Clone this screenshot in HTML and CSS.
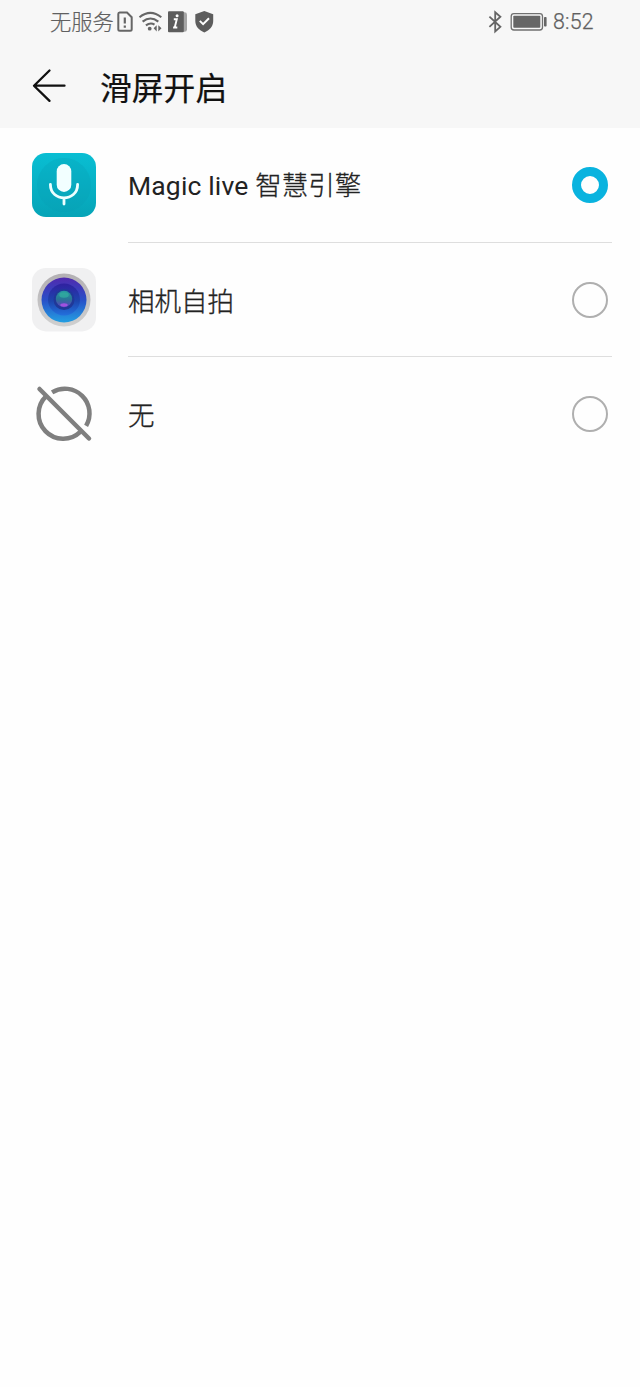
FILE: index.html
```html
<!DOCTYPE html>
<html lang="zh-CN">
<head>
<meta charset="utf-8">
<title>滑屏开启</title>
<link rel="stylesheet" href="styles.css">
</head>
<body>
<header class="top">
  <div class="status">
    <span class="carrier">无服务</span>
    <svg class="status-left" width="104" height="28" viewBox="113 8 104 28" fill="none">
      <path d="M119.6 12.5H127L131.7 17.2V29.2Q131.7 30.7 130.2 30.7H119.8Q118.3 30.7 118.3 29.2V14Q118.3 12.5 119.6 12.5Z" stroke="#666" stroke-width="2"/>
      <path d="M124.8 17.5V23.5M124.8 25.5V27.7" stroke="#666" stroke-width="2.2"/>
      <path d="M139.5 17.3Q150.5 8.5 161.3 17.3M142.6 21.6Q150.5 15.4 158.3 21.6M145.9 25.4Q150.5 22 154.5 24.6" stroke="#666" stroke-width="2.1"/>
      <circle cx="149.7" cy="28.7" r="1.9" fill="#666"/>
      <path d="M156.7 25.2V31.4L153.6 28.3ZM158.3 25.2V31.4L161.5 28.3Z" fill="#666"/>
      <path d="M183 12.2H184.5Q187 12.2 187 14.5V29.5Q187 31.8 184.5 31.8H183Z" fill="#a5a5a5"/>
      <rect x="168" y="11.3" width="15.8" height="21" rx="1" fill="#5d5d5d"/>
      <path d="M173.8 19.2H176.8L174.7 27.5H177.3M173.1 27.5H175" stroke="#fff" stroke-width="1.9"/>
      <circle cx="177.1" cy="15.7" r="1.5" fill="#fff"/>
      <path d="M204.3 11L213.2 14.2V21C213.2 26.5 209.5 30.3 204.3 32.5C199.1 30.3 195.3 26.5 195.3 21V14.2Z" fill="#5d5d5d"/>
      <path d="M199.8 20.9L203.1 24.1L209 18.3" stroke="#fff" stroke-width="2"/>
    </svg>
    <svg class="status-right" width="62" height="28" viewBox="486 8 62 28" fill="none">
      <path d="M489.4 16.7L500.4 26.8L495.2 31.4V12.2L500.4 16.7L489.4 26.8" stroke="#666" stroke-width="1.8"/>
      <rect x="511.2" y="13.7" width="31.3" height="16.3" rx="2.7" stroke="#707070" stroke-width="1.3"/>
      <rect x="513.3" y="15.8" width="27" height="12" rx=".8" fill="#666"/>
      <rect x="544" y="17" width="2.6" height="9.5" rx=".8" fill="#666"/>
    </svg>
    <span class="clock">8:52</span>
  </div>
  <div class="titlebar">
    <svg width="36" height="36" viewBox="0 0 36 36" fill="none" stroke="#111" stroke-width="2.3" stroke-linecap="round" stroke-linejoin="round">
      <path d="M18.5 2.5L3 17.7L18.5 32.9M3.3 17.7H33.5"/>
    </svg>
    <h1 class="title">滑屏开启</h1>
  </div>
</header>
<main class="list">
  <div class="row">
    <svg class="icon" width="64" height="64" viewBox="0 0 64 64" fill="none">
      <defs><linearGradient id="teal" x1="0" y1="0" x2="0" y2="1"><stop stop-color="#09bed3"/><stop offset="1" stop-color="#06a4b7"/></linearGradient></defs>
      <rect width="64" height="64" rx="14" fill="url(#teal)"/>
      <circle cx="32" cy="32" r="27" fill="#079db3" opacity=".28"/>
      <rect x="24.7" y="11" width="14.6" height="28" rx="7.3" fill="#f2ffff"/>
      <path d="M18.4 31.5C18.4 49.4 45.6 49.4 45.6 31.5M32 45V51" stroke="#edffff" stroke-width="2.8" stroke-linecap="round"/>
    </svg>
    <div class="body"><span class="label"><span class="latin">Magic live </span>智慧引擎</span><span class="radio selected"></span></div>
  </div>
  <div class="row">
    <svg class="icon" width="64" height="64" viewBox="0 0 64 64">
      <defs>
        <linearGradient id="rim" x1="0" y1="0" x2="0" y2="1"><stop stop-color="#b3b0b3"/><stop offset="1" stop-color="#d0d0d0"/></linearGradient>
        <linearGradient id="outer" x1="0" y1="0" x2="0" y2="1"><stop stop-color="#5029ae"/><stop offset=".5" stop-color="#2850c8"/><stop offset="1" stop-color="#239fe2"/></linearGradient>
        <linearGradient id="inner" x1="0" y1="0" x2="0" y2="1"><stop stop-color="#3020a0"/><stop offset=".55" stop-color="#1d45ad"/><stop offset="1" stop-color="#2370dd"/></linearGradient>
        <linearGradient id="pupil" x1="0" y1="0" x2="0" y2="1"><stop stop-color="#299aa0"/><stop offset=".5" stop-color="#287697"/><stop offset="1" stop-color="#603fc0"/></linearGradient>
      </defs>
      <rect width="64" height="63.4" rx="14" fill="#f0f0f1"/>
      <circle cx="32" cy="32" r="26.5" fill="url(#rim)"/>
      <circle cx="32" cy="32" r="22.5" fill="url(#outer)"/>
      <circle cx="32" cy="31.5" r="16" fill="url(#inner)"/>
      <circle cx="32" cy="31.5" r="10.5" fill="#203898"/>
      <circle cx="32" cy="31" r="8.2" fill="url(#pupil)"/>
      <ellipse cx="32" cy="27" rx="4.8" ry="2.8" fill="#31ad9f" opacity=".75"/>
      <ellipse cx="32" cy="37" rx="3.7" ry="1.7" fill="#a052df"/>
    </svg>
    <div class="body"><span class="label">相机自拍</span><span class="radio"></span></div>
  </div>
  <div class="row">
    <svg class="icon" width="64" height="64" viewBox="0 0 64 64" fill="none" stroke="#7f7f7f" stroke-width="4.5">
      <path d="M7.5 7L57 56.5" stroke-linecap="round"/>
      <path d="M14.2 14.2A24.6 24.6 0 0 0 48.3 49.9M20.1 10.3A24.6 24.6 0 0 1 54.1 43.8"/>
    </svg>
    <div class="body"><span class="label">无</span><span class="radio"></span></div>
  </div>
</main>
</body>
</html>
```
FILE: styles.css
```css
* { box-sizing: border-box; }
body {
  margin: 0;
  min-height: 1387px;
  background: #fefefe;
  color: #222;
  font-family: Roboto, "Noto Sans CJK SC", sans-serif;
}
.top { height: 128px; background: #f7f7f7; }
.status {
  display: flex;
  align-items: center;
  height: 44px;
  padding: 0 46px 0 50px;
  color: #606060;
  font-size: 21.3px;
  line-height: 44px;
  font-weight: 300;
}
.carrier { width: 63px; padding-top: 2px; white-space: nowrap; -webkit-text-stroke: .2px #606060; }
.status-right { margin-left: auto; }
.clock { width: 41px; margin-left: 5px; letter-spacing: .2px; white-space: nowrap; -webkit-text-stroke: .25px #606060; }
.titlebar { display: flex; align-items: center; height: 84px; padding-left: 31px; }
.title {
  margin: 5px 0 0 33px;
  color: #111;
  font-size: 31.8px;
  line-height: 44px;
  font-weight: 400;
  -webkit-text-stroke: .2px #111;
}
.list { padding-top: .6px; }
.row { display: flex; align-items: center; height: 114.4px; padding: 0 28px 0 32px; }
.icon { flex: none; margin-bottom: 1px; }
.body {
  display: flex;
  flex: 1;
  align-items: center;
  justify-content: space-between;
  height: 100%;
  margin-left: 32px;
  padding-right: 4px;
  border-bottom: 1px solid #dedede;
}
.row:last-child .body { border-bottom-color: transparent; }
.label {
  padding-top: 4px;
  font-size: 26.5px;
  line-height: 40px;
  font-weight: 300;
  -webkit-text-stroke: .3px #222;
}
.latin { font-weight: 400; letter-spacing: .15px; -webkit-text-stroke: 0; }
.row:first-child .label { padding-top: 2px; }
.radio { width: 36px; height: 36px; border: 2px solid #afafaf; border-radius: 50%; }
.radio.selected { border: 9px solid #09b3df; }
```
